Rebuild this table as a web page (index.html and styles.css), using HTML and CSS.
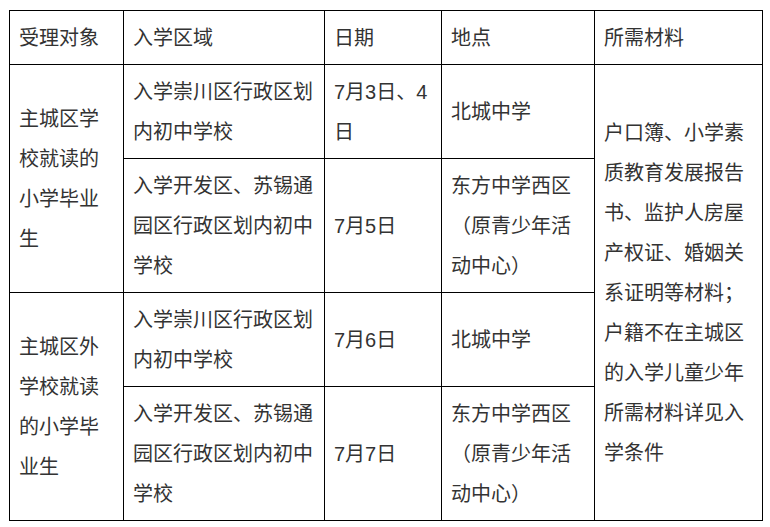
FILE: index.html
```html
<!DOCTYPE html>
<html lang="zh-CN">
<head>
<meta charset="utf-8">
<title>招生安排</title>
<link rel="stylesheet" href="styles.css">
</head>
<body>
<table class="schedule">
  <colgroup>
    <col class="c1"><col class="c2"><col class="c3"><col class="c4"><col class="c5">
  </colgroup>
  <tr>
    <td>受理对象</td>
    <td>入学区域</td>
    <td>日期</td>
    <td>地点</td>
    <td>所需材料</td>
  </tr>
  <tr>
    <td rowspan="2">主城区学<br>校就读的<br>小学毕业<br>生</td>
    <td>入学崇川区行政区划<br>内初中学校</td>
    <td>7月3日、4<br>日</td>
    <td>北城中学</td>
    <td rowspan="4">户口簿、小学素<br>质教育发展报告<br>书、监护人房屋<br>产权证、婚姻关<br>系证明等材料；<br>户籍不在主城区<br>的入学儿童少年<br>所需材料详见入<br>学条件</td>
  </tr>
  <tr>
    <td>入学开发区、苏锡通<br>园区行政区划内初中<br>学校</td>
    <td>7月5日</td>
    <td>东方中学西区<br>（原青少年活<br>动中心）</td>
  </tr>
  <tr>
    <td rowspan="2">主城区外<br>学校就读<br>的小学毕<br>业生</td>
    <td>入学崇川区行政区划<br>内初中学校</td>
    <td>7月6日</td>
    <td>北城中学</td>
  </tr>
  <tr>
    <td>入学开发区、苏锡通<br>园区行政区划内初中<br>学校</td>
    <td>7月7日</td>
    <td>东方中学西区<br>（原青少年活<br>动中心）</td>
  </tr>
</table>
</body>
</html>
```

FILE: styles.css
```css
html, body {
  margin: 0;
  padding: 0;
  background: #ffffff;
}

body {
  font-family: "Liberation Sans", "Noto Sans CJK SC", sans-serif;
  font-size: 20px;
  color: #333333;
}

.schedule {
  margin: 10px 0 0 9px;
  border-collapse: collapse;
  table-layout: fixed;
  width: 753px;
}

.schedule .c1 { width: 114px; }
.schedule .c2 { width: 201px; }
.schedule .c3 { width: 117px; }
.schedule .c4 { width: 153px; }
.schedule .c5 { width: 168px; }

.schedule td {
  border: 1px solid #000000;
  padding: 7px 9px 6px 9px;
  line-height: 40px;
  vertical-align: middle;
  text-align: left;
  white-space: nowrap;
  overflow: hidden;
}
```
